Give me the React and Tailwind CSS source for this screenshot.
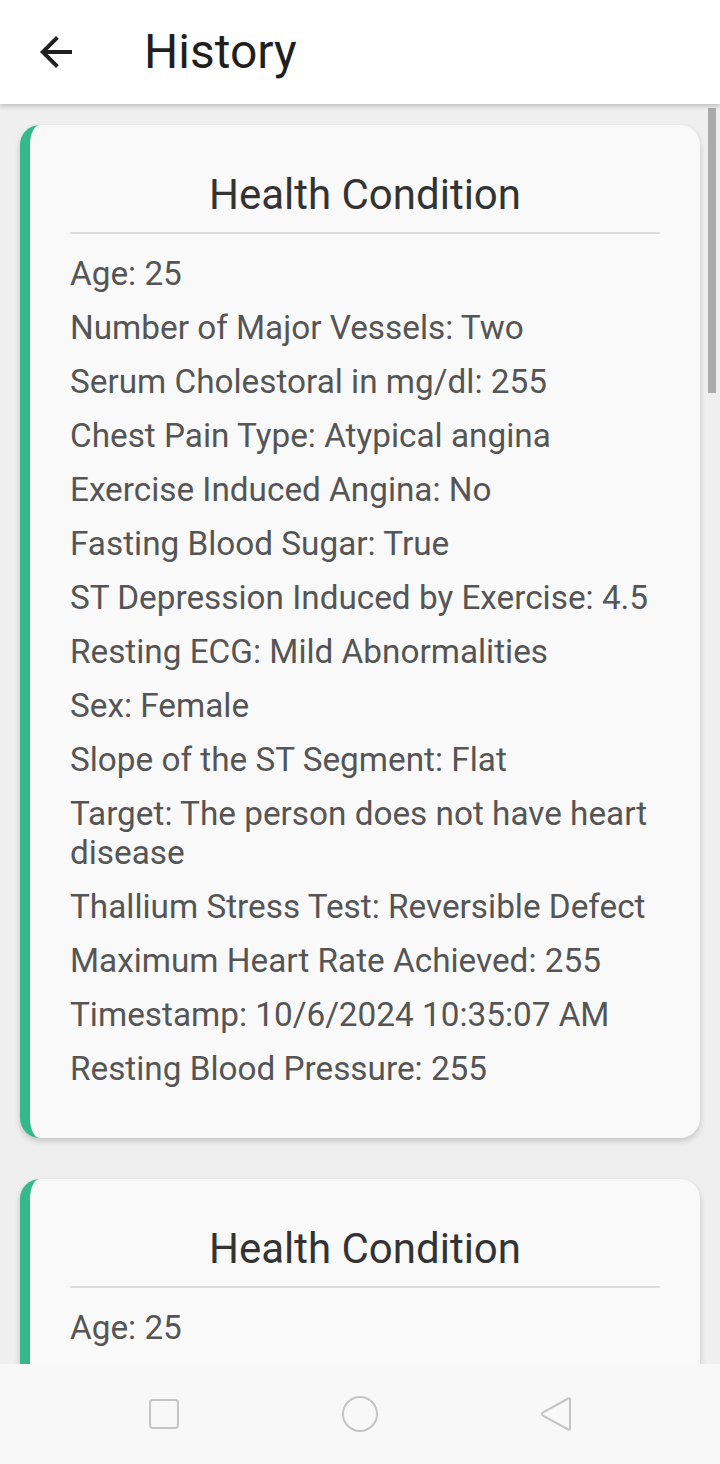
import React from 'react';

const record = [
  ['Age', '25'],
  ['Number of Major Vessels', 'Two'],
  ['Serum Cholestoral in mg/dl', '255'],
  ['Chest Pain Type', 'Atypical angina'],
  ['Exercise Induced Angina', 'No'],
  ['Fasting Blood Sugar', 'True'],
  ['ST Depression Induced by Exercise', '4.5'],
  ['Resting ECG', 'Mild Abnormalities'],
  ['Sex', 'Female'],
  ['Slope of the ST Segment', 'Flat'],
  ['Target', 'The person does not have heart disease'],
  ['Thallium Stress Test', 'Reversible Defect'],
  ['Maximum Heart Rate Achieved', '255'],
  ['Timestamp', '10/6/2024 10:35:07 AM'],
  ['Resting Blood Pressure', '255'],
];

const HistoryCard = ({ rows }) => (
  <div className="rounded-[20px] border-l-[10px] border-[#34b98a] bg-[#f9f9f9] px-[40px] pt-[45px] pb-[50px] shadow-[0_3px_6px_rgba(0,0,0,0.18)]">
    <h2 className="text-center text-[42px] leading-[50px] text-[#333333]">Health Condition</h2>
    <div className="mt-[12px] h-[2px] bg-[#dddddd]" />
    <div className="mt-[20px] flex flex-col gap-[15px]">
      {rows.map(([label, value]) => (
        <p key={label} className="text-[33.3px] leading-[39px] text-[#555555]">
          {label}: {value}
        </p>
      ))}
    </div>
  </div>
);

const App = () => {
  return (
    <div className="flex h-[1464px] w-[720px] flex-col overflow-hidden bg-[#efefef]" style={{ fontFamily: 'Roboto, "Noto Sans", sans-serif' }}>
      <header className="relative z-10 flex h-[104px] shrink-0 items-center bg-white shadow-[0_2px_5px_rgba(0,0,0,0.22)]">
        <button className="ml-[32px] flex h-[48px] w-[48px] items-center justify-center">
          <svg width="48" height="48" viewBox="0 0 24 24" fill="#1f1f1f">
            <path d="M20 11H7.83l5.59-5.59L12 4l-8 8 8 8 1.41-1.41L7.83 13H20v-2z" />
          </svg>
        </button>
        <h1 className="ml-[64px] text-[48px] leading-none text-[#1f1f1f]">History</h1>
      </header>

      <main className="relative flex-1 overflow-hidden">
        <div className="flex flex-col gap-[41px] px-[20px] pt-[21px]">
          <HistoryCard rows={record} />
          <HistoryCard rows={record} />
        </div>
        <div className="absolute right-[4px] top-[4px] h-[285px] w-[8px] bg-[#ababab]" />
      </main>

      <nav className="grid h-[100px] shrink-0 grid-cols-3 items-center justify-items-center bg-[#f8f8f8] px-[66px]">
        <svg width="32" height="32" viewBox="0 0 32 32" fill="none" stroke="#c4c4c4" strokeWidth="2">
          <rect x="2" y="2" width="28" height="28" rx="3" />
        </svg>
        <svg width="38" height="38" viewBox="0 0 38 38" fill="none" stroke="#c4c4c4" strokeWidth="2">
          <circle cx="19" cy="19" r="17" />
        </svg>
        <svg width="34" height="36" viewBox="0 0 34 36" fill="none" stroke="#c4c4c4" strokeWidth="2" strokeLinejoin="round">
          <path d="M31 3.5 Q31 1.5 29.3 2.5 L3.5 16.7 Q2 18 3.5 19.3 L29.3 33.5 Q31 34.5 31 32.5 Z" />
        </svg>
      </nav>
    </div>
  );
};

export default App;
